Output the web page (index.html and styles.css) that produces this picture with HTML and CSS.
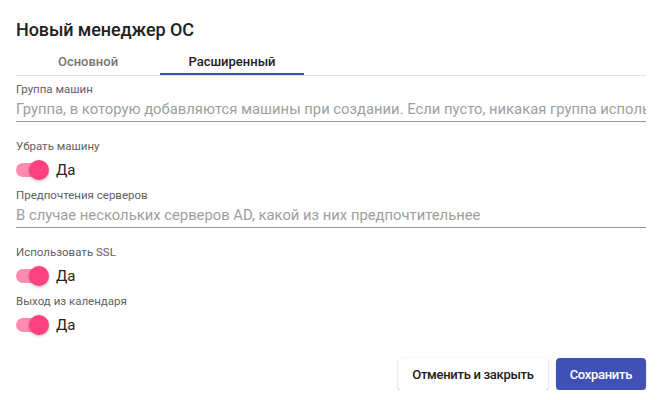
FILE: index.html
```html
<!DOCTYPE html>
<html lang="ru">

<head>
    <meta charset="UTF-8">
    <meta name="viewport" content="width=device-width, initial-scale=1.0">
    <title>Новый менеджер ОС</title>
    <link rel="stylesheet" href="styles.css">
</head>

<body>
    <div class="dialog">
        <h2 class="title">Новый менеджер ОС</h2>

        <div class="tabs">
            <div class="tab">Основной</div>
            <div class="tab active">Расширенный</div>
        </div>

        <div class="field">
            <label class="fieldLabel" for="grupo">Группа машин</label>
            <input class="textInput" type="text" id="grupo"
                placeholder="Группа, в которую добавляются машины при создании. Если пусто, никакая группа использоваться не будет">
        </div>

        <div class="field toggleField">
            <span class="fieldLabel">Убрать машину</span>
            <div class="toggleRow">
                <span class="switch"><span class="thumb"></span></span>
                <span class="toggleText">Да</span>
            </div>
        </div>

        <div class="field">
            <label class="fieldLabel" for="serv">Предпочтения серверов</label>
            <input class="textInput" type="text" id="serv"
                placeholder="В случае нескольких серверов AD, какой из них предпочтительнее">
        </div>

        <div class="field toggleField">
            <span class="fieldLabel">Использовать SSL</span>
            <div class="toggleRow">
                <span class="switch"><span class="thumb"></span></span>
                <span class="toggleText">Да</span>
            </div>
        </div>

        <div class="field toggleField">
            <span class="fieldLabel">Выход из календаря</span>
            <div class="toggleRow">
                <span class="switch"><span class="thumb"></span></span>
                <span class="toggleText">Да</span>
            </div>
        </div>

        <div class="actions">
            <button class="btn btnCancel">Отменить и закрыть</button>
            <button class="btn btnSave">Сохранить</button>
        </div>
    </div>
</body>

</html>
```

FILE: styles.css
```css
body {
    margin: 0;
    background-color: #fff;
    font-family: Roboto, "Liberation Sans", sans-serif;
    color: #212121;
}

.dialog {
    padding: 18px 21px 0 16px;
}

.title {
    margin: 0;
    font-size: 18px;
    font-weight: 500;
    line-height: 24px;
    letter-spacing: -0.1px;
    color: #212121;
}

.tabs {
    display: flex;
    margin-top: 5px;
    border-bottom: 1px solid #e0e0e0;
}

.tab {
    width: 144px;
    height: 28px;
    box-sizing: border-box;
    display: flex;
    align-items: center;
    justify-content: center;
    font-size: 13px;
    font-weight: 500;
    color: #757575;
}

.tab.active {
    color: #212121;
    border-bottom: 2px solid #3f51b5;
    padding-top: 2px;
}

.field {
    display: flex;
    flex-direction: column;
    margin-top: 6px;
}

.field + .field {
    margin-top: 17px;
}

.toggleField + .field {
    margin-top: 6px;
}

.fieldLabel {
    font-size: 11.5px;
    line-height: 14px;
    color: #5f5f5f;
}

.textInput {
    margin-top: 3px;
    padding: 0 0 2px 0;
    border: none;
    border-bottom: 1px solid #949494;
    outline: none;
    font-family: Roboto, "Liberation Sans", sans-serif;
    font-size: 14.8px;
    line-height: 20px;
    height: 23px;
    box-sizing: border-box;
    background: transparent;
    width: 100%;
}

.textInput::placeholder {
    color: #9e9e9e;
}

.toggleRow {
    display: flex;
    align-items: center;
    height: 24px;
    margin-top: 5px;
}

.switch {
    position: relative;
    width: 31px;
    height: 14px;
    border-radius: 7px;
    background-color: #ff8ab3;
}

.switch .thumb {
    position: absolute;
    left: 13px;
    top: -3px;
    width: 20px;
    height: 20px;
    border-radius: 50%;
    background-color: #ff4081;
    box-shadow: 0 1px 3px rgba(0, 0, 0, 0.3);
}

.toggleText {
    margin-left: 9px;
    font-size: 15px;
    color: #212121;
}

.actions {
    display: flex;
    justify-content: flex-end;
    gap: 8px;
    margin-top: 21px;
}

.btn {
    height: 32px;
    padding: 0 14px;
    border: none;
    border-radius: 4px;
    font-family: Roboto, "Liberation Sans", sans-serif;
    font-size: 13px;
    font-weight: 500;
    letter-spacing: -0.3px;
    cursor: pointer;
}

.btnCancel {
    background-color: #fff;
    color: #212121;
    box-shadow: 0 2px 2px rgba(0, 0, 0, 0.2), 0 0 2px rgba(0, 0, 0, 0.1);
}

.btnSave {
    background-color: #3f51b5;
    color: #fff;
    box-shadow: 0 2px 2px rgba(0, 0, 0, 0.2);
}
```
